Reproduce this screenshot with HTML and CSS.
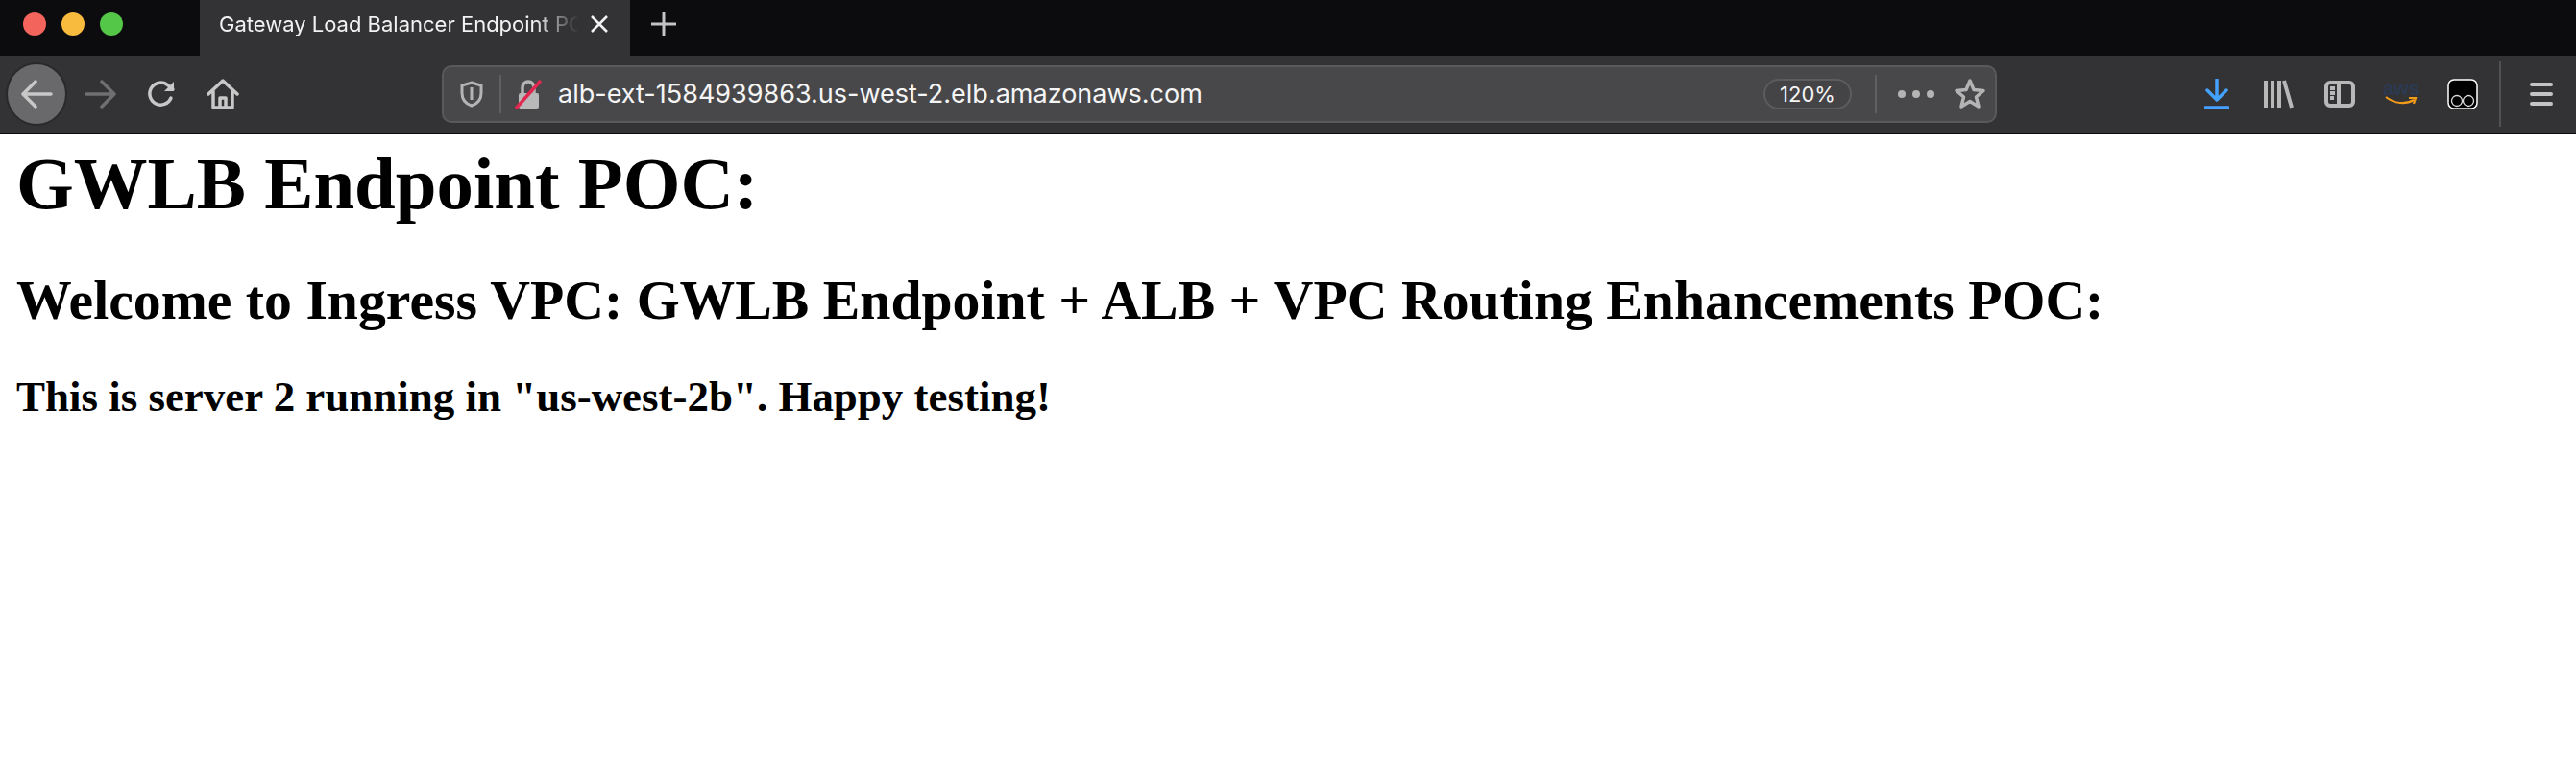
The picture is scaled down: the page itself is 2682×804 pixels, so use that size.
FILE: index.html
```html
<!DOCTYPE html>
<html>
<head>
<meta charset="utf-8">
<title>Gateway Load Balancer Endpoint POC</title>
<link rel="stylesheet" href="styles.css">
</head>
<body>
<div class="tabbar">
	<div class="lights"><i class="red"></i><i class="yellow"></i><i class="green"></i></div>
	<div class="tab">
		<span class="tab-title">Gateway Load Balancer Endpoint POC</span>
		<svg class="tab-close" width="20" height="20" viewBox="0 0 20 20"><path d="M2 2L18 18M18 2L2 18"/></svg>
	</div>
	<svg class="tab-new" width="28" height="28" viewBox="0 0 28 28"><path d="M14 1V27M1 14H27"/></svg>
</div>
<div class="toolbar">
	<div class="nav">
		<div class="back">
			<svg width="34" height="30" viewBox="0 0 34 30"><path d="M16 2L3 15L16 28M3 15H32"/></svg>
		</div>
		<div class="slot fwd">
			<svg width="34" height="30" viewBox="0 0 34 30"><path d="M18 2L31 15L18 28M31 15H2"/></svg>
		</div>
		<div class="slot reload">
			<svg width="32" height="32" viewBox="0 0 32 32"><path d="M26 20A11.500 11.500 0 1 1 23 7L28 11"/><path class="solid" d="M29 3V13H19Z"/></svg>
		</div>
		<div class="slot home">
			<svg width="34" height="34" viewBox="0 0 34 34"><path d="M2 17L17 3L32 17M7 14V31H27V14M14 31V21H20V31"/></svg>
		</div>
	</div>
	<div class="urlbar">
		<svg class="shield" width="24" height="28" viewBox="0 0 24 28"><path d="M12 2L22 5V13C22 20 18 24 12 26C6 24 2 20 2 13V5Z"/><path class="half" d="M12 7V20"/></svg>
		<div class="vline"></div>
		<svg class="lock" width="30" height="32" viewBox="0 0 30 32"><path class="shackle" d="M9 15V9A6 6 0 0 1 21 9V15"/><rect class="body" x="5" y="15" width="21" height="16" rx="2"/><path class="slash" d="M2 31L28 2"/></svg>
		<span class="url">alb-ext-1584939863.us-west-2.elb.amazonaws.com</span>
		<span class="zoom">120%</span>
		<div class="vline vline-end"></div>
		<div class="dots"><i></i><i></i><i></i></div>
		<svg class="star" width="34" height="34" viewBox="0 0 34 34"><path d="M17 3L21 12.500L31 13.500L23.500 20L26 30L17 24.500L8 30L10.500 20L3 13.500L13 12.500Z"/></svg>
	</div>
	<div class="tools">
		<div class="slot">
			<svg class="dl" width="26" height="32" viewBox="0 0 26 32"><path d="M13 1V21M3 12L13 22L23 12M1 30H25"/></svg>
		</div>
		<div class="slot">
			<svg class="gray-icon" width="32" height="32" viewBox="0 0 32 32"><path d="M3 2V30M10 2V30M17 2V30M22 2L30 30"/></svg>
		</div>
		<div class="slot">
			<svg class="gray-icon" width="32" height="28" viewBox="0 0 32 28"><rect x="2" y="2" width="28" height="24" rx="4"/><path d="M15 2V26M6 8H11M6 13H11M6 18H10"/></svg>
		</div>
		<div class="slot">
			<div class="amazon">
				<span>aws</span>
				<svg width="34" height="12" viewBox="0 0 34 12"><path d="M1 2C10 9 22 10 30 5M25 3H32L30 9"/></svg>
			</div>
		</div>
		<div class="slot">
			<svg width="32" height="32" viewBox="0 0 32 32"><rect x="1" y="1" width="30" height="30" rx="6" fill="#000" stroke="#fff" stroke-width="1.500"/><circle cx="10" cy="23" r="5.500" fill="none" stroke="#ddd" stroke-width="1.300"/><circle cx="22" cy="23" r="5.500" fill="none" stroke="#ddd" stroke-width="1.300"/></svg>
		</div>
		<div class="vline tools-line"></div>
		<div class="menu"><i></i><i></i><i></i></div>
	</div>
</div>
<div class="page">
	<h1>GWLB Endpoint POC:</h1>
	<h2>Welcome to Ingress VPC: GWLB Endpoint + ALB + VPC Routing Enhancements POC:</h2>
	<h3>This is server 2 running in "us-west-2b". Happy testing!</h3>
</div>
</body>
</html>
```

FILE: styles.css
```css
*{box-sizing:border-box;}
html,body{margin:0;padding:0;background:#fff;}
body{font-family:"Liberation Serif",serif;color:#000;overflow:hidden;}

/* tabs */
.tabbar{display:flex;align-items:stretch;height:58px;background:#0c0c0e;}
.lights{display:flex;align-items:center;gap:16px;width:208px;padding:0 0 8px 24px;}
.lights i{display:block;width:24px;height:24px;border-radius:50%;}
.red{background:#f3645c;}
.yellow{background:#f8bb3e;}
.green{background:#54c648;}
.tab{display:flex;align-items:center;width:448px;background:#333336;padding:0 22px 8px 20px;}
.tab-title{flex:1;overflow:hidden;white-space:nowrap;font:22px/30px Inter,"Liberation Sans",sans-serif;color:#f2f2f2;-webkit-mask-image:linear-gradient(90deg,#000 88%,transparent 100%);mask-image:linear-gradient(90deg,#000 88%,transparent 100%);}
.tab-close{margin-left:12px;fill:none;stroke:#f2f2f2;stroke-width:2.500;}
.tab-new{align-self:center;margin:-8px 0 0 21px;fill:none;stroke:#c4c4c4;stroke-width:3;}

/* toolbar */
.toolbar{display:flex;align-items:center;height:82px;background:#333336;border-bottom:2px solid #0c0c0e;}
.nav{display:flex;align-items:center;width:460px;padding-left:6px;}
.back{display:flex;align-items:center;justify-content:center;width:64px;height:66px;border-radius:50%;background:#69696b;border:2px solid #29292b;}
.back svg,.fwd svg,.reload svg,.home svg{fill:none;stroke:#c8c8c8;stroke-width:3.500;stroke-linecap:round;stroke-linejoin:round;}
.slot{display:flex;align-items:center;justify-content:center;flex:none;width:64px;}
.fwd{width:70px;}
.fwd svg{stroke:#6f6f71;}
.reload{width:56px;}
.reload svg .solid{fill:#c8c8c8;stroke:none;}
.home{width:72px;}

.urlbar{display:flex;align-items:center;width:1619px;height:60px;background:#48484b;border:2px solid #59595c;border-radius:10px;}
.shield{margin-left:17px;fill:none;stroke:#b4b4b4;stroke-width:3;}
.vline{width:2px;height:40px;background:#5f5f63;}
.urlbar>.vline:first-of-type{margin-left:17px;}
.lock{margin-left:13px;fill:none;}
.shackle{stroke:#b4b4b4;stroke-width:3.500;}
.lock .body{fill:#b9b9b9;}
.slash{stroke:#e22850;stroke-width:3.500;}
.url{margin-left:16px;flex:1;font:27px/32px Inter,"Liberation Sans",sans-serif;color:#f5f5f5;white-space:nowrap;}
.zoom{width:92px;height:32px;border:2px solid #5c5c5f;border-radius:16px;background:#444447;font:22px/28px Inter,"Liberation Sans",sans-serif;color:#f5f5f5;text-align:center;}
.vline-end{margin-left:24px;}
.dots{display:flex;gap:7px;margin-left:22px;}
.dots i{display:block;width:8px;height:8px;border-radius:50%;background:#b4b4b4;}
.star{margin:0 9px 0 20px;fill:none;stroke:#b4b4b4;stroke-width:3.500;stroke-linejoin:round;}

.tools{display:flex;align-items:center;flex:1;padding-left:197px;}
.dl{fill:none;stroke:#45a1ff;stroke-width:3.500;stroke-linecap:round;stroke-linejoin:round;}
.gray-icon{fill:none;stroke:#b8b8b8;stroke-width:4;}
.amazon{display:flex;flex-direction:column;align-items:center;}
.amazon span{font:bold 20px/14px "Liberation Sans",sans-serif;color:#2b3a50;}
.amazon svg{fill:none;stroke:#f09a1a;stroke-width:2.200;}
.tools-line{height:68px;margin-left:6px;background:#515154;}
.menu{display:flex;flex-direction:column;gap:6px;margin-left:30px;}
.menu i{display:block;width:24px;height:4px;border-radius:2px;background:#c4c4c4;}

/* page */
.page{padding:8px 0 0 17px;}
h1{margin:0 0 44px;font-size:76.800px;}
h2{margin:0 0 42px;font-size:57.740px;}
h3{margin:0;font-size:44.960px;}
```
